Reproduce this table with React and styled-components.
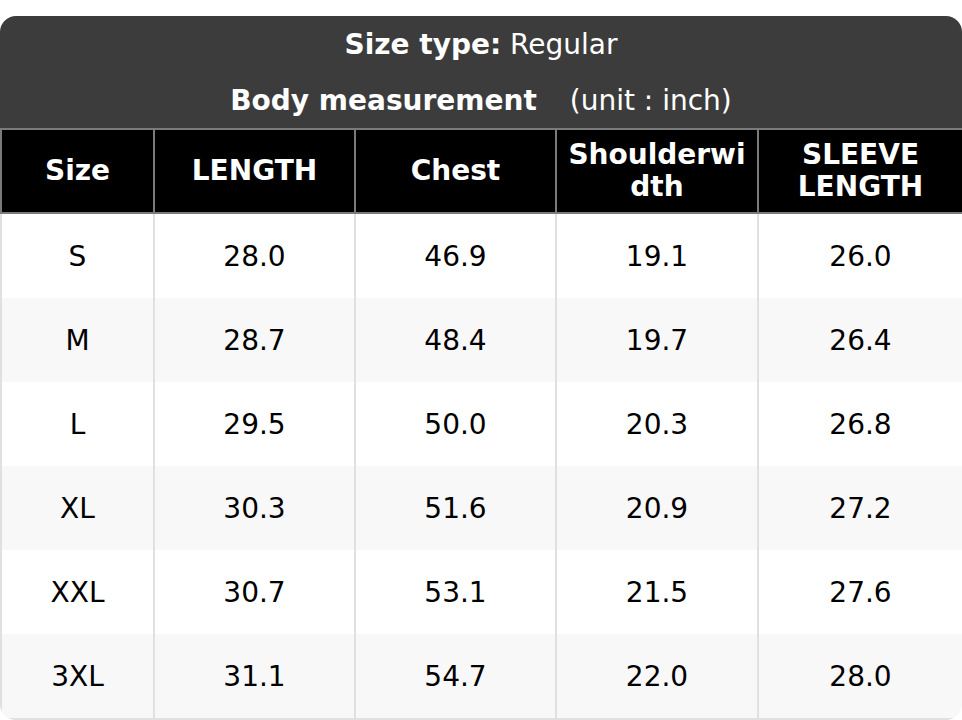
import React from "react";
import styled, { createGlobalStyle } from "styled-components";

const GlobalStyle = createGlobalStyle`
  html, body {
    margin: 0;
    padding: 0;
    background: #ffffff;
  }
  body {
    font-family: "DejaVu Sans", "Liberation Sans", sans-serif;
  }
`;

const Page = styled.div`
  padding-top: 16px;
  width: 962px;
`;

const Card = styled.div`
  border-radius: 16px;
  overflow: hidden;
  background: #ffffff;
`;

const TitleBar = styled.div`
  background: #3c3c3c;
  color: #ffffff;
  display: flex;
  flex-direction: column;
  align-items: center;
`;

const TitleLine = styled.div`
  height: 56px;
  display: flex;
  align-items: center;
  justify-content: center;
  font-size: 28px;
`;

const Bold = styled.span`
  font-weight: bold;
`;

const Unit = styled.span`
  margin-left: 33px;
`;

const Table = styled.table`
  width: 100%;
  border-collapse: collapse;
  table-layout: fixed;
`;

const HeadCell = styled.th`
  background: #000000;
  color: #ffffff;
  font-weight: bold;
  font-size: 28px;
  line-height: 32px;
  height: 82px;
  padding: 0 8px;
  text-align: center;
  border: 2px solid #7a7a7a;
  overflow-wrap: anywhere;
`;

const Row = styled.tr`
  background: ${(p) => (p.$striped ? "#f8f8f8" : "#ffffff")};
`;

const Cell = styled.td`
  font-size: 28px;
  height: 84px;
  padding: 0;
  text-align: center;
  color: #000000;
  border: 2px solid #e0e0e0;
  border-top: none;
  border-bottom: none;
`;

const LastRow = styled(Row)`
  td {
    border-bottom: 2px solid #e0e0e0;
  }
`;

const columns = ["Size", "LENGTH", "Chest", "Shoulderwidth", "SLEEVE LENGTH"];
const widths = [153, 201, 201, 202, 205];

const rows = [
  ["S", "28.0", "46.9", "19.1", "26.0"],
  ["M", "28.7", "48.4", "19.7", "26.4"],
  ["L", "29.5", "50.0", "20.3", "26.8"],
  ["XL", "30.3", "51.6", "20.9", "27.2"],
  ["XXL", "30.7", "53.1", "21.5", "27.6"],
  ["3XL", "31.1", "54.7", "22.0", "28.0"],
];

const SizeTable = () => {
  return (
    <Card>
      <TitleBar>
        <TitleLine>
          <Bold>Size type:</Bold>&nbsp;Regular
        </TitleLine>
        <TitleLine>
          <Bold>Body measurement</Bold>
          <Unit>(unit : inch)</Unit>
        </TitleLine>
      </TitleBar>
      <Table>
        <colgroup>
          {widths.map((w, i) => (
            <col key={i} style={{ width: w }} />
          ))}
        </colgroup>
        <thead>
          <tr>
            {columns.map((c) => (
              <HeadCell key={c}>{c}</HeadCell>
            ))}
          </tr>
        </thead>
        <tbody>
          {rows.map((r, i) => {
            const RowEl = i === rows.length - 1 ? LastRow : Row;
            return (
              <RowEl key={r[0]} $striped={i % 2 === 1}>
                {r.map((v, j) => (
                  <Cell key={j}>{v}</Cell>
                ))}
              </RowEl>
            );
          })}
        </tbody>
      </Table>
    </Card>
  );
};

export default function App() {
  return (
    <>
      <GlobalStyle />
      <Page>
        <SizeTable />
      </Page>
    </>
  );
}
